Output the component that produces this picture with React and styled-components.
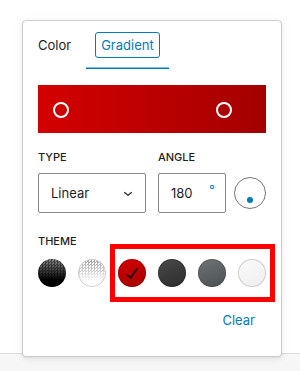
import React, { useState } from "react";
import styled, { createGlobalStyle } from "styled-components";

const GlobalStyle = createGlobalStyle`
  html, body { margin: 0; padding: 0; }
  body {
    font-family: Inter, "Noto Sans", sans-serif;
    -webkit-font-smoothing: antialiased;
  }
`;

const themes = [
  { id: "black", bg: "linear-gradient(rgba(0,0,0,0.45), #000 75%)", checker: true },
  { id: "white", bg: "linear-gradient(rgba(255,255,255,0.15), #fff 80%)", checker: true, light: true },
  { id: "red", bg: "linear-gradient(160deg, #d40000, #a30000)" },
  { id: "dark", bg: "linear-gradient(160deg, #4a4a4a, #2b2b2b)" },
  { id: "gray", bg: "linear-gradient(160deg, #6e7376, #4b5053)" },
  { id: "light", bg: "linear-gradient(160deg, #fbfbfb, #eeeeee)", light: true },
];

export default function App() {
  const [tab, setTab] = useState("gradient");
  const [theme, setTheme] = useState("red");

  return (
    <Page>
      <GlobalStyle />
      <Popover>
        <Tabs>
          <Tab active={tab === "color"} onClick={() => setTab("color")}>
            <TabLabel>Color</TabLabel>
          </Tab>
          <Tab active={tab === "gradient"} onClick={() => setTab("gradient")}>
            <TabLabel focused={tab === "gradient"}>Gradient</TabLabel>
          </Tab>
        </Tabs>

        <Body>
          <GradientBar>
            <Stop />
            <Stop />
          </GradientBar>

          <Controls>
            <Field>
              <Label>Type</Label>
              <Select>
                <span>Linear</span>
                <svg width="18" height="18" viewBox="0 0 24 24">
                  <path d="M17.5 11.6L12 16l-5.5-4.4.9-1.2L12 14l4.6-3.6 1 1.2z" fill="#1e1e1e" />
                </svg>
              </Select>
            </Field>
            <Field>
              <Label>Angle</Label>
              <AngleRow>
                <NumberInput>
                  <span>180</span>
                  <Degree>°</Degree>
                </NumberInput>
                <Dial>
                  <DialDot />
                </Dial>
              </AngleRow>
            </Field>
          </Controls>

          <Label>Theme</Label>
          <Swatches>
            {themes.map((t) => (
              <Swatch
                key={t.id}
                bg={t.bg}
                checker={t.checker}
                light={t.light}
                onClick={() => setTheme(t.id)}
              >
                {theme === t.id && (
                  <svg width="24" height="24" viewBox="0 0 24 24">
                    <path d="M16.7 7.1l-6.3 8.5-3.2-2.5-.9 1.2 4.5 3.6L17.9 8z" fill="#111" />
                  </svg>
                )}
              </Swatch>
            ))}
          </Swatches>

          <Footer>
            <ClearButton>Clear</ClearButton>
          </Footer>
        </Body>
      </Popover>
      <Highlight />
    </Page>
  );
}

const Page = styled.div`
  position: relative;
  width: 300px;
  height: 371px;
  overflow: hidden;
  padding: 20px 0 0 22px;
  box-sizing: border-box;
  background: linear-gradient(
    to bottom,
    #fff 353px,
    #dcdcdc 353px,
    #dcdcdc 354px,
    #f6f6f6 354px
  );
`;

const Popover = styled.div`
  position: relative;
  width: 260px;
  height: 337px;
  box-sizing: border-box;
  background: #fff;
  border: 1px solid #cccccc;
  border-radius: 4px;
  box-shadow: 0 1px 2px rgba(0, 0, 0, 0.06), 0 2px 6px rgba(0, 0, 0, 0.05),
    0 0 14px rgba(0, 0, 0, 0.03);
`;

const Tabs = styled.div`
  display: flex;
  height: 48px;
`;

const Tab = styled.button`
  display: flex;
  align-items: center;
  justify-content: center;
  height: 48px;
  padding: 0 9px;
  margin: 0;
  border: none;
  background: none;
  font: inherit;
  font-size: 13px;
  color: ${(p) => (p.active ? "#007cba" : "#1e1e1e")};
  box-shadow: ${(p) => (p.active ? "inset 0 -1.5px 0 #007cba" : "none")};
  cursor: pointer;
`;

const TabLabel = styled.span`
  padding: 4px 5px;
  border: 1.5px solid ${(p) => (p.focused ? "#007cba" : "transparent")};
  border-radius: 3px;
  line-height: 16px;
`;

const Body = styled.div`
  padding: 16px 15px 0 15px;
`;

const GradientBar = styled.div`
  height: 48px;
  background: linear-gradient(90deg, #d40000 0%, #a30000 100%);
  display: flex;
  align-items: center;
  justify-content: space-between;
  padding: 0 34px 0 15px;
`;

const Stop = styled.span`
  width: 16px;
  height: 16px;
  box-sizing: border-box;
  border: 2px solid #fff;
  border-radius: 50%;
  margin-top: 1px;
`;

const Controls = styled.div`
  display: flex;
  gap: 12px;
  margin-top: 16px;
  margin-bottom: 20px;
`;

const Field = styled.div`
  display: flex;
  flex-direction: column;
`;

const Label = styled.div`
  font-size: 11px;
  font-weight: 500;
  text-transform: uppercase;
  line-height: 16px;
  color: #1e1e1e;
  margin-bottom: 8px;
`;

const Select = styled.div`
  width: 108px;
  height: 40px;
  box-sizing: border-box;
  border: 1px solid #8a8a8a;
  border-radius: 2px;
  display: flex;
  align-items: center;
  justify-content: space-between;
  padding: 0 8px 0 12px;
  font-size: 13px;
  color: #1e1e1e;
`;

const AngleRow = styled.div`
  display: flex;
  align-items: center;
  gap: 8px;
`;

const NumberInput = styled.div`
  width: 68px;
  height: 40px;
  box-sizing: border-box;
  border: 1px solid #8a8a8a;
  border-radius: 2px;
  display: flex;
  align-items: center;
  justify-content: space-between;
  padding: 0 10px 0 12px;
  font-size: 13px;
  color: #1e1e1e;
`;

const Degree = styled.span`
  color: #007cba;
  font-size: 13px;
  align-self: flex-start;
  margin-top: 8px;
`;

const Dial = styled.div`
  width: 32px;
  height: 32px;
  box-sizing: border-box;
  border: 1px solid #757575;
  border-radius: 50%;
  display: flex;
  justify-content: center;
  align-items: flex-end;
  padding-bottom: 5px;
`;

const DialDot = styled.span`
  width: 6px;
  height: 6px;
  border-radius: 50%;
  background: #007cba;
`;

const Swatches = styled.div`
  display: flex;
  gap: 12px;
  margin-top: 10px;
`;

const Swatch = styled.button`
  width: 28px;
  height: 28px;
  padding: 0;
  border-radius: 50%;
  border: none;
  display: flex;
  align-items: center;
  justify-content: center;
  cursor: pointer;
  background: ${(p) =>
    p.checker
      ? `${p.bg}, repeating-conic-gradient(#8a8a8a 0 25%, #fff 0 50%) 0 0 / 3px 3px`
      : p.bg};
  box-shadow: ${(p) =>
    p.light ? "inset 0 0 0 1px #cfcfcf" : "inset 0 0 0 1px rgba(0,0,0,0.15)"};
`;

const Footer = styled.div`
  display: flex;
  justify-content: flex-end;
  margin-top: 15px;
`;

const ClearButton = styled.button`
  height: 36px;
  padding: 0 11px;
  border: none;
  background: none;
  font: inherit;
  font-size: 13px;
  color: #007cba;
  cursor: pointer;
`;

const Highlight = styled.div`
  position: absolute;
  left: 110px;
  top: 244px;
  width: 165px;
  height: 58px;
  box-sizing: border-box;
  border: 5px solid #ff0000;
  pointer-events: none;
`;
